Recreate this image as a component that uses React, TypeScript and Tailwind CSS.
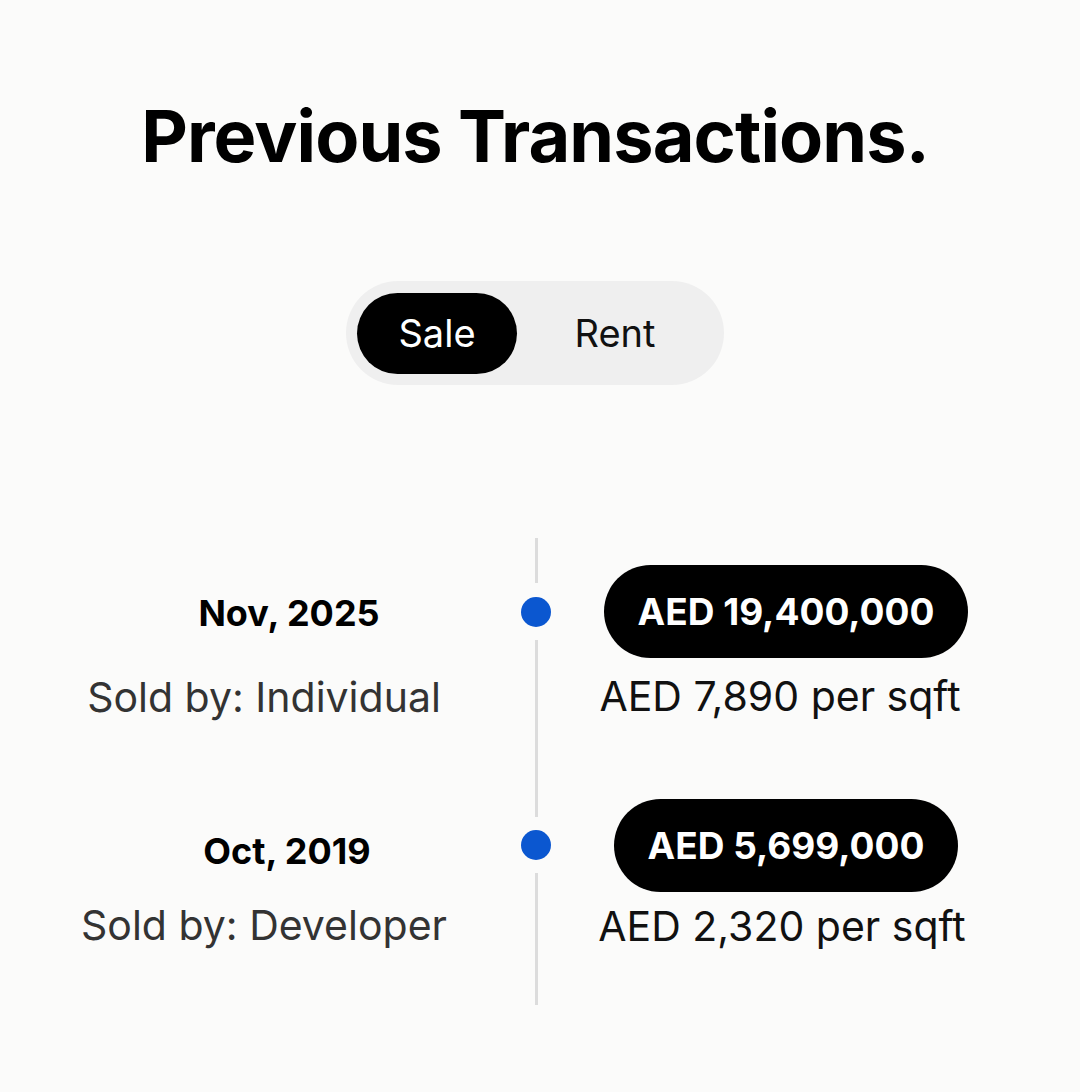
const font = { fontFamily: "Inter, 'Noto Sans', sans-serif" };

const transactions = [
  { date: "Nov, 2025", seller: "Individual", price: "AED 19,400,000", perSqft: "AED 7,890 per sqft" },
  { date: "Oct, 2019", seller: "Developer", price: "AED 5,699,000", perSqft: "AED 2,320 per sqft" },
];

const Dot = () => (
  <div className="w-[30px] h-[30px] rounded-full bg-[#0b57d0] shrink-0" />
);

const Line = ({ h }: { h: string }) => <div className={`w-[3px] bg-[#dcdcdc] ${h}`} />;

export default function App() {
  return (
    <div className="min-h-[1092px] w-full bg-[#fbfbfa] text-black" style={font}>
      <h1 className="pt-[92px] pr-[10px] text-center text-[72px] font-bold leading-[88px] tracking-[-0.9px]">
        Previous Transactions.
      </h1>

      <div className="mt-[101px] flex justify-center pr-[10px]">
        <div className="flex items-center rounded-full bg-[#efefef] p-[11px] w-[378px] h-[104px]">
          <button className="h-[81px] w-[160px] rounded-full bg-black text-white text-[38px]">Sale</button>
          <button className="h-[81px] flex-1 text-[38px] text-[#111]">Rent</button>
        </div>
      </div>

      <div className="mt-[153px] flex pl-[38px]">
        <div className="w-[452px] flex flex-col items-center">
          <div className="mt-[54px] pl-[50px] text-[36px] font-bold leading-[42px]">{transactions[0].date}</div>
          <div className="mt-[39px] text-[41px] leading-[48px] text-[#333]">Sold by: {transactions[0].seller}</div>
          <div className="mt-[109px] pl-[46px] text-[36px] font-bold leading-[42px]">{transactions[1].date}</div>
          <div className="mt-[29px] text-[41px] leading-[48px] text-[#333]">Sold by: {transactions[1].seller}</div>
        </div>

        <div className="w-[92px] flex flex-col items-center">
          <Line h="h-[45px]" />
          <div className="mt-[14px]"><Dot /></div>
          <div className="mt-[13px]"><Line h="h-[177px]" /></div>
          <div className="mt-[13px]"><Dot /></div>
          <div className="mt-[13px]"><Line h="h-[132px]" /></div>
        </div>

        <div className="w-[408px] flex flex-col items-center">
          <div className="mt-[27px] h-[93px] px-[34px] rounded-full bg-black text-white flex items-center text-[37px] font-bold">
            {transactions[0].price}
          </div>
          <div className="mt-[14px] pr-[12px] text-[41px] leading-[48px] text-[#111]">{transactions[0].perSqft}</div>
          <div className="mt-[79px] h-[93px] px-[34px] rounded-full bg-black text-white flex items-center text-[37px] font-bold">
            {transactions[1].price}
          </div>
          <div className="mt-[10px] pr-[8px] text-[41px] leading-[48px] text-[#111]">{transactions[1].perSqft}</div>
        </div>
      </div>
    </div>
  );
}
